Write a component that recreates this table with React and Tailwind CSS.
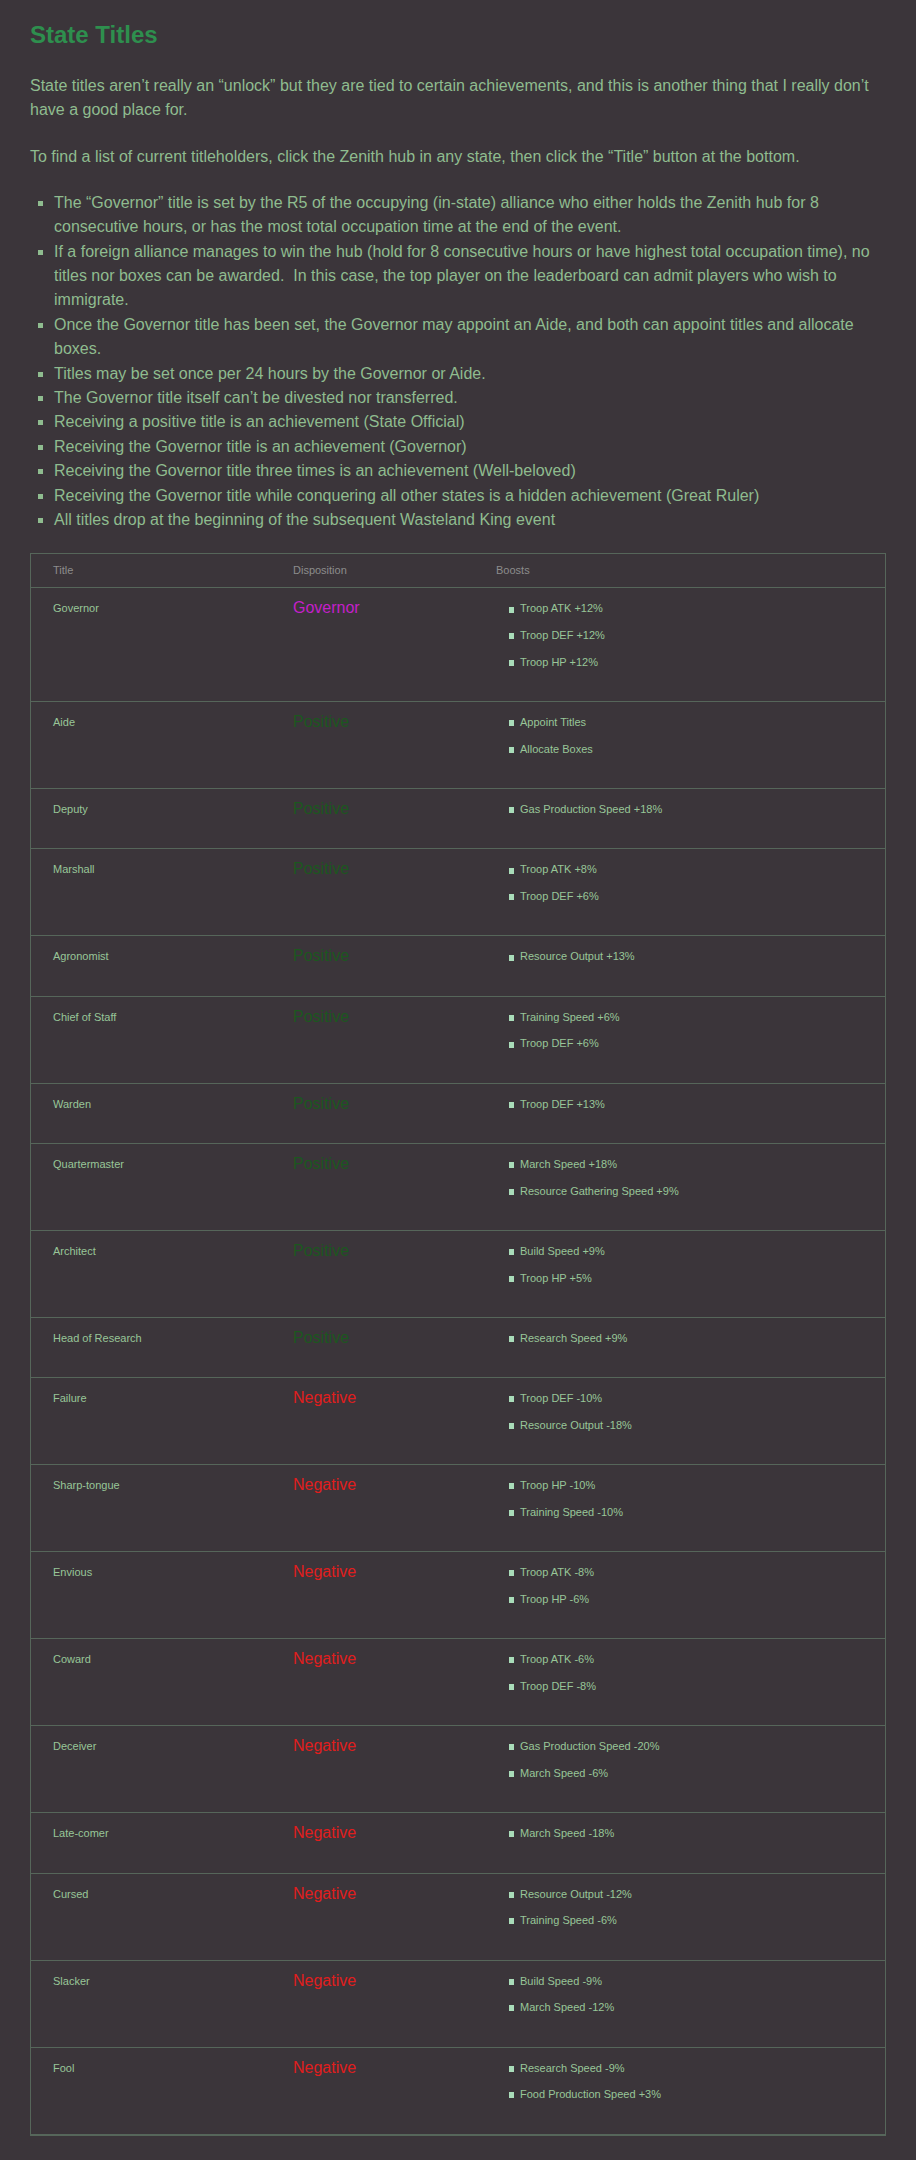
const notes = [
  "The \u201cGovernor\u201d title is set by the R5 of the occupying (in-state) alliance who either holds the Zenith hub for 8 consecutive hours, or has the most total occupation time at the end of the event.",
  "If a foreign alliance manages to win the hub (hold for 8 consecutive hours or have highest total occupation time), no titles nor boxes can be awarded.\u00a0 In this case, the top player on the leaderboard can admit players who wish to immigrate.",
  "Once the Governor title has been set, the Governor may appoint an Aide, and both can appoint titles and allocate boxes.",
  "Titles may be set once per 24 hours by the Governor or Aide.",
  "The Governor title itself can\u2019t be divested nor transferred.",
  "Receiving a positive title is an achievement (State Official)",
  "Receiving the Governor title is an achievement (Governor)",
  "Receiving the Governor title three times is an achievement (Well-beloved)",
  "Receiving the Governor title while conquering all other states is a hidden achievement (Great Ruler)",
  "All titles drop at the beginning of the subsequent Wasteland King event",
];

const titles = [
  { name: "Governor", kind: "Governor", boosts: ["Troop ATK +12%", "Troop DEF +12%", "Troop HP +12%"] },
  { name: "Aide", kind: "Positive", boosts: ["Appoint Titles", "Allocate Boxes"] },
  { name: "Deputy", kind: "Positive", boosts: ["Gas Production Speed +18%"] },
  { name: "Marshall", kind: "Positive", boosts: ["Troop ATK +8%", "Troop DEF +6%"] },
  { name: "Agronomist", kind: "Positive", boosts: ["Resource Output +13%"] },
  { name: "Chief of Staff", kind: "Positive", boosts: ["Training Speed +6%", "Troop DEF +6%"] },
  { name: "Warden", kind: "Positive", boosts: ["Troop DEF +13%"] },
  { name: "Quartermaster", kind: "Positive", boosts: ["March Speed +18%", "Resource Gathering Speed +9%"] },
  { name: "Architect", kind: "Positive", boosts: ["Build Speed +9%", "Troop HP +5%"] },
  { name: "Head of Research", kind: "Positive", boosts: ["Research Speed +9%"] },
  { name: "Failure", kind: "Negative", boosts: ["Troop DEF -10%", "Resource Output -18%"] },
  { name: "Sharp-tongue", kind: "Negative", boosts: ["Troop HP -10%", "Training Speed -10%"] },
  { name: "Envious", kind: "Negative", boosts: ["Troop ATK -8%", "Troop HP -6%"] },
  { name: "Coward", kind: "Negative", boosts: ["Troop ATK -6%", "Troop DEF -8%"] },
  { name: "Deceiver", kind: "Negative", boosts: ["Gas Production Speed -20%", "March Speed -6%"] },
  { name: "Late-comer", kind: "Negative", boosts: ["March Speed -18%"] },
  { name: "Cursed", kind: "Negative", boosts: ["Resource Output -12%", "Training Speed -6%"] },
  { name: "Slacker", kind: "Negative", boosts: ["Build Speed -9%", "March Speed -12%"] },
  { name: "Fool", kind: "Negative", boosts: ["Research Speed -9%", "Food Production Speed +3%"] },
];

const kindColor = {
  Governor: "text-[#c41fc9]",
  Positive: "text-[#1c571f]",
  Negative: "text-[#e11d1d]",
};

const TitleRow = ({ row }) => (
  <div className="grid grid-cols-[240px_203px_1fr] border-b border-[#56665a] pt-[7px] pb-[25.6px]">
    <div className="pl-[22px] text-[11px] leading-[26.7px] text-[#98c698]">{row.name}</div>
    <div className={`pl-[22px] text-[16px] leading-[25px] ${kindColor[row.kind]}`}>{row.kind}</div>
    <ul className="pl-[35px] text-[11px] leading-[26.7px] text-[#98c698]">
      {row.boosts.map((b) => (
        <li key={b}>
          {/* square bullet */}
          <span className="inline-block w-[5px] h-[6px] mr-[6px] align-middle bg-[#a9dcb9]" />
          {b}
        </li>
      ))}
    </ul>
  </div>
);

export default function App() {
  return (
    <div className="min-h-[2160px] bg-[#3b353a] px-[30px] pt-[21px] pb-[20px] font-['Liberation_Sans',Arial,sans-serif]">
      {/* ===== HEADING ===== */}
      <h1 className="text-[24px] leading-[28.8px] font-bold text-[#2e8f4e]">State Titles</h1>

      <p className="mt-[24px] text-[16px] leading-[24.5px] text-[#8fbc8f]">
        State titles aren’t really an “unlock” but they are tied to certain achievements, and this is another thing that I really don’t have a good place for.
      </p>

      <p className="mt-[22px] text-[16px] leading-[24.5px] text-[#8fbc8f]">
        To find a list of current titleholders, click the Zenith hub in any state, then click the “Title” button at the bottom.
      </p>

      {/* ===== RULES ===== */}
      <ul className="mt-[21.5px] pl-6 list-[square] text-[16px] leading-[24.4px] text-[#8fbc8f]">
        {notes.map((n) => (
          <li key={n}>{n}</li>
        ))}
      </ul>

      {/* ===== TITLES TABLE ===== */}
      <div className="mt-[21px] border border-[#56665a]">
        <div className="grid grid-cols-[240px_203px_1fr] border-b border-[#56665a] text-[11px] leading-[33px] text-[#8c8c8c]">
          <div className="pl-[22px]">Title</div>
          <div className="pl-[22px]">Disposition</div>
          <div className="pl-[22px]">Boosts</div>
        </div>
        {titles.map((row) => (
          <TitleRow key={row.name} row={row} />
        ))}
      </div>
    </div>
  );
}
